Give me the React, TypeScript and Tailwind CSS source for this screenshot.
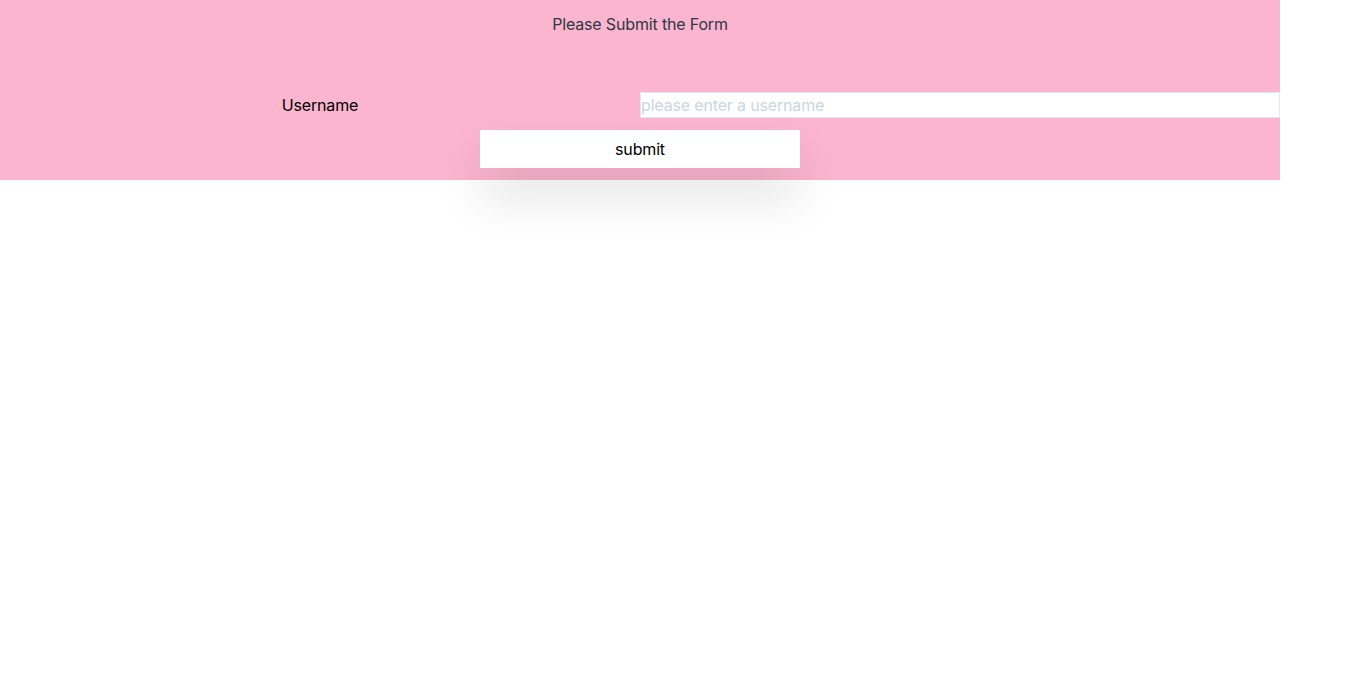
export default function App() {
  return (
    <div className="min-h-screen bg-white">
      <div className="w-[1280px] bg-[#fbb5ce] pt-3 pb-3 font-['Inter',sans-serif] text-base tracking-[-0.01em]">
        <h1 className="text-center leading-6 text-[#2d3748]">Please Submit the Form</h1>

        {/* Username row */}
        <div className="mt-14 grid grid-cols-2 items-center">
          <label className="text-center text-black">Username</label>
          <input
            className="h-[26px] w-full border border-[#e2e8f0] bg-white px-0 text-black outline-none placeholder:text-[#cbd5e0]"
            placeholder="please enter a username"
          />
        </div>

        <div className="mt-3 flex justify-center">
          <button className="h-[38px] w-[320px] bg-white text-black shadow-[0_28px_50px_0_rgba(0,0,0,0.12)]">submit</button>
        </div>
      </div>
    </div>
  );
}
